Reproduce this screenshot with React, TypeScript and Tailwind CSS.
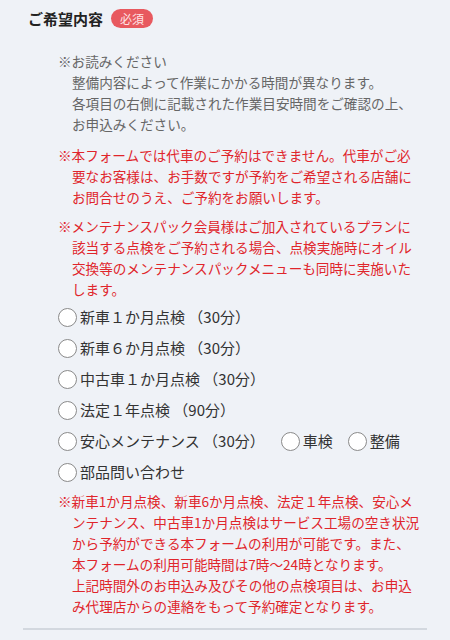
function Radio({ label }: { label: string }) {
  return (
    <label className="flex items-center gap-[3px] cursor-pointer">
      <span className="w-[19px] h-[19px] rounded-full border-[1.5px] border-[#8a8a8a] bg-white shrink-0" />
      <span className="text-[15px] text-[#333333]">{label}</span>
    </label>
  )
}

function Note({ children, className }: { children: React.ReactNode; className?: string }) {
  return (
    <p className={`pl-[14px] -indent-[14px] text-[13.6px] leading-[21px] ${className ?? ''}`}>{children}</p>
  )
}

export default function App() {
  return (
    <div className="min-h-[640px] bg-[#eff2f7] px-[23px] font-['Noto_Sans_CJK_JP','Noto_Sans',sans-serif]">
      <div className="flex items-center gap-[8px] pl-[5px] pt-[9px]">
        <h2 className="text-[15px] leading-[19px] font-bold text-[#222222]">ご希望内容</h2>
        <span className="h-[19px] px-[9px] rounded-full bg-[#e8595f] text-[12px] leading-[19px] text-[#ffe4e6]">必須</span>
      </div>

      <div className="mt-[23px] pl-[35px] pr-[5px] pb-[11px] border-b-2 border-[#d3d8df]">
        <Note className="text-[#666666]">
          ※お読みください
          <br />
          整備内容によって作業にかかる時間が異なります。
          <br />
          各項目の右側に記載された作業目安時間をご確認の上、
          <br />
          お申込みください。
        </Note>
        <Note className="mt-[10px] text-[#e0252b]">
          ※本フォームでは代車のご予約はできません。代車がご必要なお客様は、お手数ですが予約をご希望される店舗にお問合せのうえ、ご予約をお願いします。
        </Note>
        <Note className="mt-[8px] text-[#e0252b]">
          ※メンテナンスパック会員様はご加入されているプランに該当する点検をご予約される場合、点検実施時にオイル交換等のメンテナンスパックメニューも同時に実施いたします。
        </Note>

        <div className="mt-[2px]">
          <div className="h-[31px] flex items-center"><Radio label="新車１か月点検 （30分）" /></div>
          <div className="h-[31px] flex items-center"><Radio label="新車６か月点検 （30分）" /></div>
          <div className="h-[31px] flex items-center"><Radio label="中古車１か月点検 （30分）" /></div>
          <div className="h-[31px] flex items-center"><Radio label="法定１年点検 （90分）" /></div>
          <div className="h-[31px] flex items-center gap-[16px]">
            <Radio label="安心メンテナンス （30分）" />
            <div className="flex items-center gap-[15px]">
              <Radio label="車検" />
              <Radio label="整備" />
            </div>
          </div>
          <div className="h-[31px] flex items-center"><Radio label="部品問い合わせ" /></div>
        </div>

        <Note className="mt-[3px] text-[#e0252b]">
          ※新車1か月点検、新車6か月点検、法定１年点検、安心メンテナンス、中古車1か月点検はサービス工場の空き状況から予約ができる本フォームの利用が可能です。また、
          <br />
          本フォームの利用可能時間は7時～24時となります。
          <br />
          上記時間外のお申込み及びその他の点検項目は、お申込み代理店からの連絡をもって予約確定となります。
        </Note>
      </div>
    </div>
  )
}
